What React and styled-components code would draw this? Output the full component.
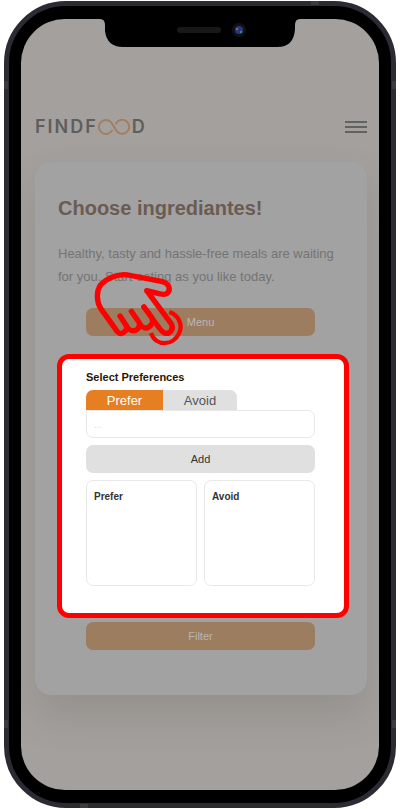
import React, { useState } from "react";
import styled, { createGlobalStyle } from "styled-components";

const GlobalStyle = createGlobalStyle`
  * { box-sizing: border-box; }
  body { margin: 0; background: #fff; font-family: "Liberation Sans", Arial, sans-serif; }
  button, input { font: inherit; }
  h1, h2, h3, p { margin: 0; }
`;

const Stage = styled.main`
  display: flex;
  min-height: 100vh;
  padding: 1px 4px;
`;

const Phone = styled.div`
  position: relative;
  display: flex;
  flex: 1;
  min-width: 0;
  padding: 13px 12px;
  border: 5px solid #2c2b33;
  border-radius: 62px;
  background: #000;
`;

const Screen = styled.div`
  flex: 1;
  min-width: 0;
  padding: 99px 12px 90px 14px;
  border-radius: 44px;
  background: #a4a09d;
  overflow: hidden;
`;

const Notch = styled.svg`
  position: absolute;
  top: 12px;
  left: 50%;
  width: 200px;
  height: 30px;
  margin-left: -100px;
`;

const AntennaBand = styled.span`
  position: absolute;
  background: #3c3c40;
  width: ${(p) => (p.$side ? 4 : 8)}px;
  height: ${(p) => (p.$side ? 8 : 4)}px;
  ${(p) => p.$x}
  ${(p) => p.$y}
`;

const Header = styled.header`
  display: flex;
  align-items: center;
  justify-content: space-between;
  height: 18px;
  margin-bottom: 26px;
`;

const Logo = styled.a`
  display: flex;
  align-items: center;
  color: #5e5e5d;
  font: 600 18px/18px Inter, sans-serif;
  letter-spacing: 2px;
  text-decoration: none;
`;

const Infinity = styled.svg`
  width: 32px;
  height: 16px;
  margin-right: 2px;
`;

const MenuToggle = styled.button`
  display: flex;
  padding: 0;
  border: 0;
  background: none;
`;

const Card = styled.section`
  padding: 34px 18px 45px 22px;
  border-radius: 16px;
  background: #a2a2a2;
  box-shadow: 0 20px 40px rgba(70, 60, 55, 0.16);
`;

const Title = styled.h1`
  color: #6b5b53;
  font-size: 20px;
  line-height: 24px;
`;

const Intro = styled.p`
  margin: 22px 0 20px;
  color: #747474;
  font-size: 13px;
  line-height: 23px;
`;

const Copy = styled.div`
  padding-left: 1px;
`;

const ActionArea = styled.div`
  position: relative;
  padding: 0 34px 0 29px;
`;

const Button = styled.button`
  display: block;
  width: 100%;
  height: 28px;
  padding: 0;
  border: 0;
  border-radius: 7px;
  background: ${(p) => (p.$light ? "#e0e0e0" : "#9d7d60")};
  color: ${(p) => (p.$light ? "#333" : "#b9b5b2")};
  font-size: 11px;
`;

const Pointer = styled.svg`
  position: absolute;
  top: -48px;
  left: 23px;
  width: 120px;
  height: 100px;
  pointer-events: none;
`;

const Highlight = styled.form`
  margin: 18px 0 4px;
  padding: 11px 29px 27px 24px;
  border: 5px solid #f00;
  border-radius: 12px;
  background: #fff;
`;

const Legend = styled.h2`
  margin-bottom: 6px;
  color: #2b1408;
  font-size: 11px;
  line-height: 14px;
`;

const Tabs = styled.div`
  display: flex;
`;

const Tab = styled.button`
  width: ${(p) => (p.$first ? 77 : 74)}px;
  height: 20px;
  padding: 0;
  border: 0;
  border-radius: ${(p) => (p.$first ? "7px 0 0 0" : "0 7px 0 0")};
  background: ${(p) => (p.$active ? "#e67e22" : "#e0e0e0")};
  color: ${(p) => (p.$active ? "#fff" : "#555")};
  font-size: 13px;
`;

const Field = styled.input`
  display: block;
  width: 100%;
  height: 28px;
  margin-bottom: 7px;
  padding: 0 7px;
  border: 1px solid #e8e8e8;
  border-radius: 0 7px 7px 7px;
  background: #fff;
  color: #333;
  font-size: 10px;
  &::placeholder { color: #ddd; }
`;

const Lists = styled.div`
  display: grid;
  grid-template-columns: 1fr 1fr;
  gap: 7px;
  margin-top: 7px;
`;

const ListBox = styled.section`
  min-height: 106px;
  padding: 9px 7px;
  border: 1px solid #e8e8e8;
  border-radius: 7px;
`;

const ListTitle = styled.h3`
  color: #333;
  font-size: 10px;
  line-height: 13px;
`;

export default function App() {
  const [mode, setMode] = useState("Prefer");
  return (
    <>
      <GlobalStyle />
      <Stage>
        <Phone>
          <Screen>
            <Header>
              <Logo href="#" aria-label="FINDFOOD">
                <span>FINDF</span>
                <Infinity viewBox="0 0 32 16" fill="none" stroke="#a57d5c" strokeWidth="1.900" strokeLinecap="round">
                  <path d="M14 11.500A7 7 0 1 1 13 3.200C15 5 17 10.500 19.500 13A7 7 0 1 0 18 4.500" />
                </Infinity>
                <span>D</span>
              </Logo>
              <MenuToggle type="button" aria-label="Open menu">
                <svg width="22" height="14" viewBox="0 0 22 14" stroke="#626261" strokeWidth="2">
                  <path d="M0 2H22M0 7H22M0 12H22" />
                </svg>
              </MenuToggle>
            </Header>
            <Card>
              <Copy>
                <Title>Choose ingrediantes!</Title>
                <Intro>Healthy, tasty and hassle-free meals are waiting for you. Start eating as you like today.</Intro>
              </Copy>
              <ActionArea>
                <Button type="button">Menu</Button>
                <Pointer viewBox="0 0 360 300" fill="none" stroke="#f00" strokeWidth="16" strokeLinecap="round" strokeLinejoin="round" aria-hidden="true">
                  <path d="M120 168L139 197Q144 209 134 214Q124 227 112 215L62 145C49 124 49 94 61 76C78 56 114 40 144 45L244 64C272 70 273 94 258 102C249 105 238 102 225 98L200 92L273 190C284 207 269 225 252 218Q246 215 240 207L192 141" />
                  <path d="M154 154L177 187Q182 199 173 207Q160 218 146 207L139 197M192 141L214 171Q222 185 213 195Q199 212 183 197L177 187" />
                  <path d="M268 156C297 165 309 197 297 220C280 257 228 262 213 219" strokeWidth="13" strokeLinecap="butt" />
                </Pointer>
              </ActionArea>
              <Highlight onSubmit={(e) => e.preventDefault()}>
                <Legend id="preferences-label">Select Preferences</Legend>
                <Tabs role="tablist" aria-labelledby="preferences-label">
                  {["Prefer", "Avoid"].map((name) => (
                    <Tab
                      key={name}
                      type="button"
                      role="tab"
                      aria-selected={mode === name}
                      $first={name === "Prefer"}
                      $active={mode === name}
                      onClick={() => setMode(name)}
                    >
                      {name}
                    </Tab>
                  ))}
                </Tabs>
                <Field type="text" placeholder="..." aria-labelledby="preferences-label" />
                <Button type="submit" $light>Add</Button>
                <Lists>
                  <ListBox><ListTitle>Prefer</ListTitle></ListBox>
                  <ListBox><ListTitle>Avoid</ListTitle></ListBox>
                </Lists>
              </Highlight>
              <ActionArea>
                <Button type="button">Filter</Button>
              </ActionArea>
            </Card>
          </Screen>
          <Notch viewBox="0 0 200 30" aria-hidden="true">
            <path d="M0 0H200V1Q195 1 195 7V11Q194 29 177 29H23Q7 29 5 13V7Q5 1 0 1Z" fill="#000" />
            <rect x="77" y="9" width="44" height="6" rx="3" fill="#181818" />
            <circle cx="139" cy="12" r="7" fill="#111115" />
            <circle cx="139" cy="12" r="4" fill="#283879" />
            <circle cx="137" cy="11" r="1" fill="#8770b6" />
            <circle cx="141" cy="14" r="1" fill="#4b94bd" />
          </Notch>
          <AntennaBand $side $x="left: -5px;" $y="top: 75px;" />
          <AntennaBand $side $x="right: -5px;" $y="top: 75px;" />
          <AntennaBand $side $x="left: -5px;" $y="bottom: 75px;" />
          <AntennaBand $side $x="right: -5px;" $y="bottom: 75px;" />
          <AntennaBand $x="left: 71px;" $y="bottom: -5px;" />
          <AntennaBand $x="right: 72px;" $y="top: -5px;" />
        </Phone>
      </Stage>
    </>
  );
}
